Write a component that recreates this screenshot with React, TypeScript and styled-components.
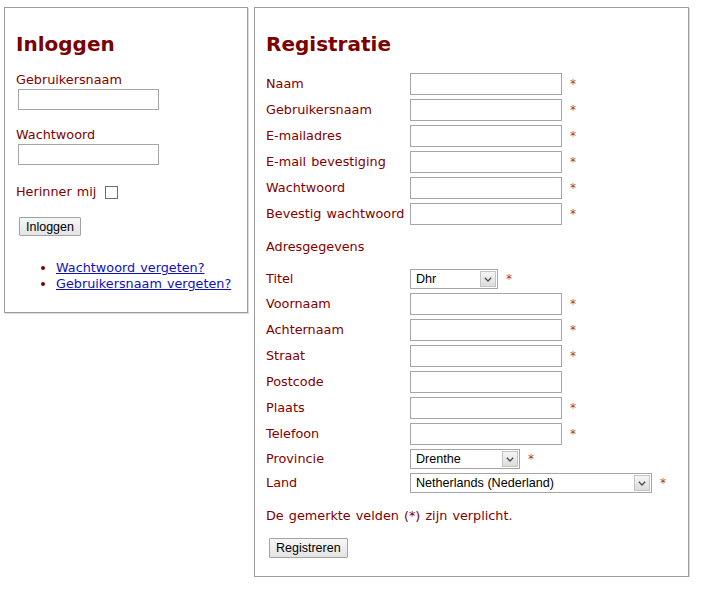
import React from "react";
import styled, { createGlobalStyle } from "styled-components";

const Global = createGlobalStyle`
  html, body { margin: 0; padding: 0; background: #fff; }
  body {
    font-family: "DejaVu Sans", Verdana, sans-serif;
    font-size: 12.8px;
    word-spacing: 1px;
    color: #800000;
  }
`;

const Page = styled.div`
  display: flex;
  align-items: flex-start;
  gap: 6px;
  padding: 7px 0 0 4px;
`;

const Panel = styled.section<{ $width: number; $pb: number }>`
  box-sizing: border-box;
  width: ${(p) => p.$width}px;
  border: 1px solid #9c9c9c;
  box-shadow: 1px 1px 0 #dcdcdc;
  padding: 24px 11px ${(p) => p.$pb}px 11px;
  background: #fff;
`;

const Heading = styled.h2`
  margin: 0 0 16px;
  font-size: 20px;
  line-height: 24px;
  font-weight: bold;
  word-spacing: 0;
  color: #7b0000;
`;

const FieldLabel = styled.label<{ $mt?: number }>`
  display: block;
  line-height: 16px;
  margin-top: ${(p) => p.$mt ?? 0}px;
`;

const TextInput = styled.input<{ $w: number; $h: number }>`
  box-sizing: border-box;
  display: block;
  width: ${(p) => p.$w}px;
  height: ${(p) => p.$h}px;
  border: 1px solid #a5a5a5;
  background: #fff;
  padding: 0 3px;
  margin: 0;
  font: 12.6px "Liberation Sans", Arial, sans-serif;
  outline: none;
`;

const LoginInput = styled(TextInput)`
  margin: 1px 0 0 2px;
`;

const RememberRow = styled.div`
  display: flex;
  align-items: center;
  gap: 9px;
  margin-top: 19px;
  line-height: 16px;
`;

const Check = styled.input`
  appearance: none;
  -webkit-appearance: none;
  box-sizing: border-box;
  width: 13px;
  height: 13px;
  margin: 0;
  border: 1px solid #6e6e6e;
  background: #fff;
`;

const Btn = styled.button<{ $mt: number; $h: number }>`
  display: block;
  box-sizing: border-box;
  height: ${(p) => p.$h}px;
  margin: ${(p) => p.$mt}px 0 0 3px;
  padding: 0 6px;
  font: 12.5px "Liberation Sans", Arial, sans-serif;
  word-spacing: 0;
  color: #000;
  background: linear-gradient(#f7f7f7, #e4e4e4);
  border: 1px solid #a3a3a3;
  border-radius: 1px;
`;

const LinkList = styled.ul`
  margin: 24px 0 0;
  padding-left: 40px;
  list-style: disc;
  line-height: 16px;
  li::marker {
    color: #800000;
  }
`;

const Link = styled.a`
  color: #1010b8;
  text-decoration: underline;
`;

const FormTable = styled.div`
  display: flex;
  flex-direction: column;
  gap: 4px;
  margin-top: 17px;
`;

const Row = styled.div<{ $h?: number }>`
  display: flex;
  align-items: center;
  height: ${(p) => p.$h ?? 22}px;
`;

const RowLabel = styled.span`
  flex: none;
  width: 144px;
  white-space: nowrap;
  line-height: 16px;
`;

const Req = styled.span`
  margin-left: 8px;
  line-height: 16px;
  font-size: 12px;
  color: #9a4040;
`;

const Section = styled.div`
  line-height: 16px;
  margin: 10px 0;
`;

const SelectBox = styled.span<{ $w: number }>`
  display: inline-flex;
  box-sizing: border-box;
  width: ${(p) => p.$w}px;
  height: 20px;
  border: 1px solid #a5a5a5;
  background: #fff;
  padding: 1px;
`;

const NativeSelect = styled.select`
  appearance: none;
  -webkit-appearance: none;
  flex: 1;
  min-width: 0;
  border: 0;
  outline: 0;
  background: transparent;
  padding: 0 0 0 4px;
  margin: 0;
  font: 12.6px "Liberation Sans", Arial, sans-serif;
  word-spacing: 0;
  color: #000;
`;

const ArrowBtn = styled.span`
  flex: none;
  box-sizing: border-box;
  width: 16px;
  border: 1px solid #c4c4c4;
  background: linear-gradient(#f5f5f5, #dcdcdc);
  display: flex;
  align-items: center;
  justify-content: center;
`;

const Note = styled.p`
  margin: 15px 0 0;
  line-height: 16px;
`;

const Chevron = () => (
  <svg width="8" height="5" viewBox="0 0 8 5">
    <polyline points="0.8,0.8 4,4 7.2,0.8" fill="none" stroke="#4a4a4a" strokeWidth="1.3" />
  </svg>
);

const Select = ({ w, value, options }: { w: number; value: string; options: string[] }) => (
  <SelectBox $w={w}>
    <NativeSelect defaultValue={value}>
      {options.map((o) => (
        <option key={o}>{o}</option>
      ))}
    </NativeSelect>
    <ArrowBtn>
      <Chevron />
    </ArrowBtn>
  </SelectBox>
);

const InputRow = ({ label, req = true }: { label: string; req?: boolean }) => (
  <Row>
    <RowLabel>{label}</RowLabel>
    <TextInput $w={152} $h={22} />
    {req && <Req>*</Req>}
  </Row>
);

export default function App() {
  return (
    <>
      <Global />
      <Page>
        <Panel $width={244} $pb={20}>
          <Heading>Inloggen</Heading>
          <FieldLabel>Gebruikersnaam</FieldLabel>
          <LoginInput $w={141} $h={21} />
          <FieldLabel $mt={17}>Wachtwoord</FieldLabel>
          <LoginInput $w={141} $h={21} type="password" />
          <RememberRow>
            <span>Herinner mij</span>
            <Check type="checkbox" />
          </RememberRow>
          <Btn $mt={17} $h={19}>Inloggen</Btn>
          <LinkList>
            <li>
              <Link href="#">Wachtwoord vergeten?</Link>
            </li>
            <li>
              <Link href="#">Gebruikersnaam vergeten?</Link>
            </li>
          </LinkList>
        </Panel>
        <Panel $width={435} $pb={18}>
          <Heading>Registratie</Heading>
          <FormTable>
            <InputRow label="Naam" />
            <InputRow label="Gebruikersnaam" />
            <InputRow label="E-mailadres" />
            <InputRow label="E-mail bevestiging" />
            <InputRow label="Wachtwoord" />
            <InputRow label="Bevestig wachtwoord" />
            <Section>Adresgegevens</Section>
            <Row $h={20}>
              <RowLabel>Titel</RowLabel>
              <Select w={88} value="Dhr" options={["Dhr", "Mevr"]} />
              <Req>*</Req>
            </Row>
            <InputRow label="Voornaam" />
            <InputRow label="Achternaam" />
            <InputRow label="Straat" />
            <InputRow label="Postcode" req={false} />
            <InputRow label="Plaats" />
            <InputRow label="Telefoon" />
            <Row $h={20}>
              <RowLabel>Provincie</RowLabel>
              <Select w={110} value="Drenthe" options={["Drenthe", "Flevoland", "Friesland", "Gelderland"]} />
              <Req>*</Req>
            </Row>
            <Row $h={20}>
              <RowLabel>Land</RowLabel>
              <Select w={242} value="Netherlands (Nederland)" options={["Netherlands (Nederland)", "Belgium (België)"]} />
              <Req>*</Req>
            </Row>
          </FormTable>
          <Note>De gemerkte velden (*) zijn verplicht.</Note>
          <Btn $mt={14} $h={20}>Registreren</Btn>
        </Panel>
      </Page>
    </>
  );
}
